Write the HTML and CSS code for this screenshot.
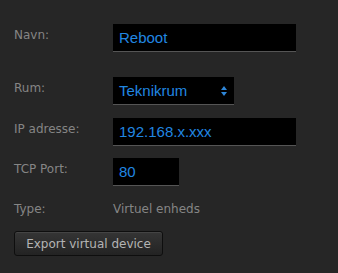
FILE: index.html
```html
<!DOCTYPE html>
<html>
<head>
<meta charset="utf-8">
<link rel="stylesheet" href="styles.css">
</head>
<body>
<div class="form">
  <div class="row row-navn">
    <div class="label">Navn:</div>
    <div class="field wide"><span class="val">Reboot</span></div>
  </div>
  <div class="row row-rum">
    <div class="label">Rum:</div>
    <div class="field select"><span class="val">Teknikrum</span>
      <svg class="arrows" width="6" height="10" viewBox="0 0 6 10"><path d="M3 0 L6 4 L0 4 Z M0 6 L6 6 L3 10 Z" fill="#2e86d8"/></svg>
    </div>
  </div>
  <div class="row row-ip">
    <div class="label">IP adresse:</div>
    <div class="field wide"><span class="val">192.168.x.xxx</span></div>
  </div>
  <div class="row row-tcp">
    <div class="label">TCP Port:</div>
    <div class="field port"><span class="val">80</span></div>
  </div>
  <div class="row row-type">
    <div class="label">Type:</div>
    <div class="text">Virtuel enheds</div>
  </div>
  <button class="btn">Export virtual device</button>
</div>
</body>
</html>
```
FILE: styles.css
```css
html, body {
  margin: 0;
  padding: 0;
  background: #262626;
  width: 338px;
  height: 273px;
  overflow: hidden;
}
.form {
  padding: 24px 0 0 14px;
  font-family: "DejaVu Sans", Verdana, sans-serif;
  font-size: 12px;
  color: #858585;
}
.row {
  display: flex;
  align-items: flex-start;
}
.label {
  width: 99px;
  padding-top: 4px;
  line-height: 14px;
}
.field {
  box-sizing: border-box;
  height: 28px;
  background: #000;
  border-bottom: 1px solid #555;
  display: flex;
  align-items: center;
  padding: 0 0 0 6px;
  font-family: "Liberation Sans", Arial, sans-serif;
  font-size: 15px;
  color: #2187e2;
}
.wide { width: 183px; }
.select { width: 121px; justify-content: space-between; padding-right: 7px; }
.port { width: 66px; }
.row-navn { margin-bottom: 25px; }
.row-rum { margin-bottom: 13px; }
.row-ip { margin-bottom: 12px; }
.row-tcp { margin-bottom: 16px; }
.row-type .label { padding-top: 0; }
.text { line-height: 14px; }
.row-type { margin-bottom: 15px; }
.btn {
  display: block;
  box-sizing: border-box;
  width: 149px;
  height: 25px;
  padding: 0;
  border: 1px solid #0e0e0e;
  border-radius: 3px;
  background: linear-gradient(#353535, #232323);
  color: #b4b4b4;
  font-family: "DejaVu Sans", Verdana, sans-serif;
  font-size: 12px;
  box-shadow: inset 0 1px 0 #444;
}
```
